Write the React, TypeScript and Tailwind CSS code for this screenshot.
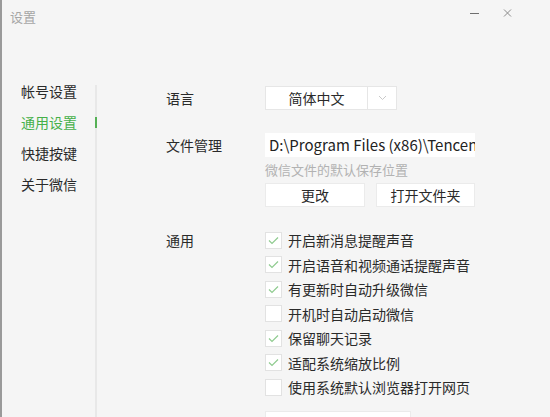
import React from "react";

const font = { fontFamily: '"Noto Sans CJK SC", "Noto Sans", sans-serif' };

function Check({ checked, label }: { checked: boolean; label: string }) {
  return (
    <div className="flex items-center h-[24.5px]">
      <div className="w-[17px] h-[17px] bg-white border border-[#e2e2e2] flex items-center justify-center">
        {checked && (
          <svg width="11" height="9" viewBox="0 0 11 9">
            <path d="M1 4.5 L4 7.5 L10 1.5" fill="none" stroke="#8fcb8f" strokeWidth="1.2" />
          </svg>
        )}
      </div>
      <span className="ml-[6px] text-[14px] text-[#2a2a2a] leading-none">{label}</span>
    </div>
  );
}

export default function App() {
  const nav = ["帐号设置", "通用设置", "快捷按键", "关于微信"];
  return (
    <div style={font} className="w-[550px] h-[417px] bg-[#f5f5f5] overflow-hidden border-l-2 border-[#9a9a9a] flex flex-col">
      <div className="h-[34px] shrink-0 flex items-start justify-between pl-[8px]">
        <span className="mt-[8px] text-[13px] text-[#a6a6a6] leading-[18px]">设置</span>
        <div className="flex items-center mt-[8px] mr-[38px] gap-[24px] h-[10px]">
          <div className="w-[9px] h-[1px] bg-[#6f6f6f]" />
          <svg width="9" height="10" viewBox="0 0 9 10">
            <path d="M1 1.5 L8 8.5 M8 1.5 L1 8.5" stroke="#8a8a8a" strokeWidth="1" />
          </svg>
        </div>
      </div>
      <div className="flex flex-1">
        <div className="w-[93px] pl-[19px] pt-[42px] flex flex-col">
          {nav.map((n, i) => (
            <div
              key={n}
              className={`h-[31px] flex items-center text-[14px] ${i === 1 ? "text-[#45b049]" : "text-[#2a2a2a]"}`}
            >
              {n}
            </div>
          ))}
        </div>
        <div className="w-[2px] mt-[51px] bg-[#e8e8e8] relative">
          <div className="absolute left-0 top-[32px] w-[2px] h-[11px] bg-[#55b055]" />
        </div>
        <div className="pl-[69px] pt-[52px] flex flex-col text-[14px] text-[#2a2a2a]">
          <div className="flex items-center">
            <div className="w-[99px]">语言</div>
            <div className="flex w-[132px] h-[24px] bg-white border border-[#e6e6e6]">
              <div className="w-[101px] flex items-center justify-center text-[14px] text-[#2a2a2a]">简体中文</div>
              <div className="flex-1 border-l border-[#e6e6e6] flex items-center justify-center">
                <svg width="9" height="6" viewBox="0 0 9 6">
                  <path d="M1 1 L4.5 4.5 L8 1" fill="none" stroke="#c9c9c9" strokeWidth="1" />
                </svg>
              </div>
            </div>
          </div>
          <div className="flex mt-[23px]">
            <div className="w-[99px] h-[24px] flex items-center">文件管理</div>
            <div className="flex flex-col">
              <div className="w-[210px] h-[24px] bg-white flex items-center pl-[4px] overflow-hidden whitespace-nowrap text-[15px] text-[#222]">
                D:\Program Files (x86)\Tencent\WeChat
              </div>
              <div className="mt-[3px] h-[20px] flex items-center text-[13px] text-[#b2b2b2]">微信文件的默认保存位置</div>
              <div className="flex gap-[11px] mt-[3px]">
                <div className="w-[100px] h-[24px] bg-white border border-[#ebebeb] flex items-center justify-center">更改</div>
                <div className="w-[99px] h-[24px] bg-white border border-[#ebebeb] flex items-center justify-center">打开文件夹</div>
              </div>
            </div>
          </div>
          <div className="flex mt-[21px]">
            <div className="w-[99px] h-[24.5px] flex items-center">通用</div>
            <div className="flex flex-col">
              <Check checked label="开启新消息提醒声音" />
              <Check checked label="开启语音和视频通话提醒声音" />
              <Check checked label="有更新时自动升级微信" />
              <Check checked={false} label="开机时自动启动微信" />
              <Check checked label="保留聊天记录" />
              <Check checked label="适配系统缩放比例" />
              <Check checked={false} label="使用系统默认浏览器打开网页" />
              <div className="mt-[11px] w-[146px] h-[25px] bg-white border border-[#ebebeb] flex items-center justify-center">
                清空聊天记录 (13.5G)
              </div>
            </div>
          </div>
        </div>
      </div>
    </div>
  );
}
